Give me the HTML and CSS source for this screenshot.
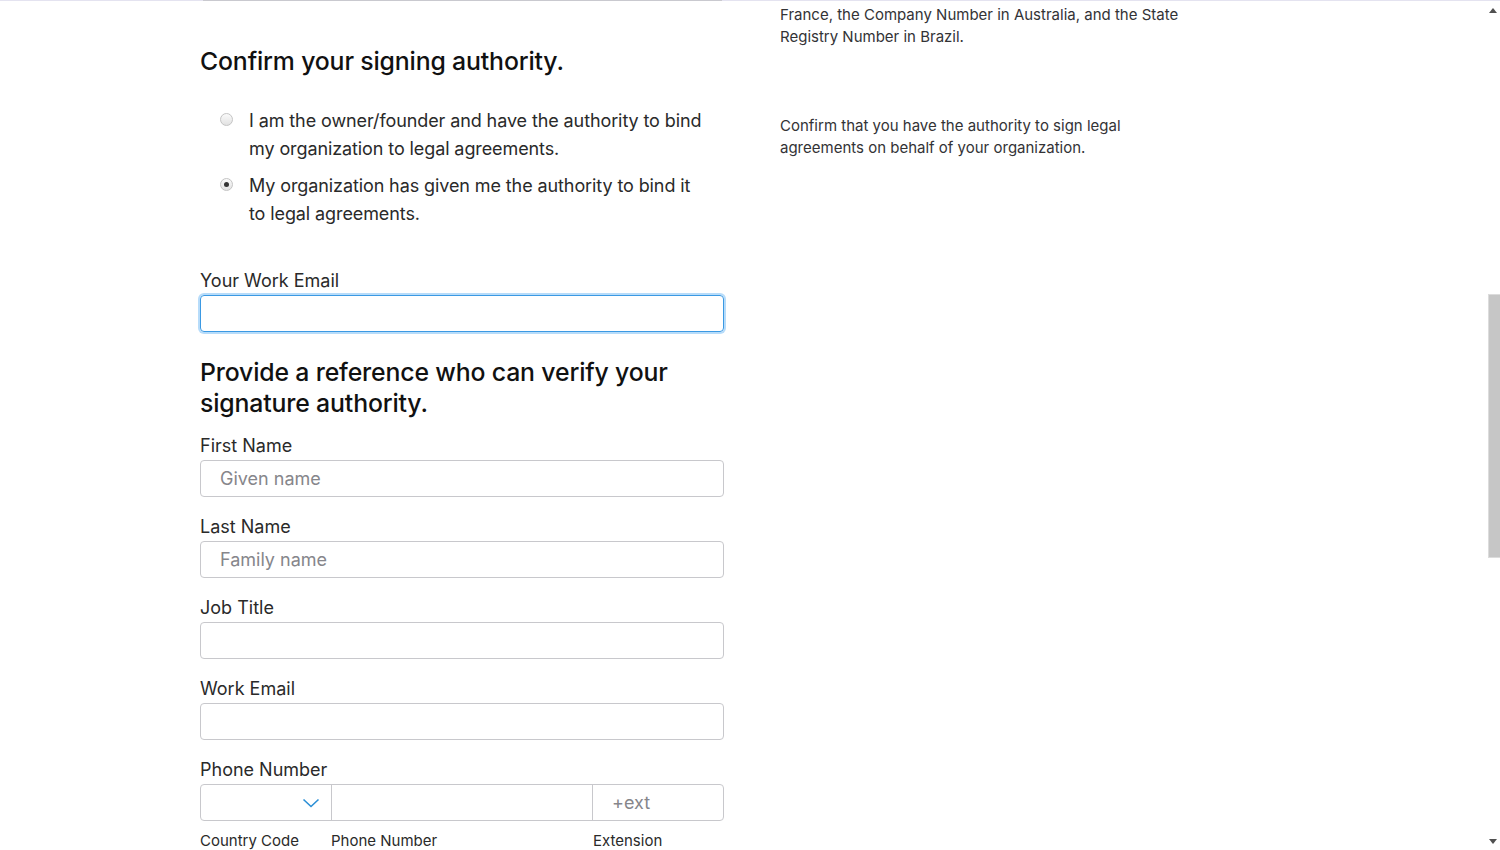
FILE: index.html
```html
<!DOCTYPE html>
<html lang="en">
<head>
<meta charset="utf-8">
<title>Signing authority</title>
<link rel="stylesheet" href="styles.css">
</head>
<body>
<div class="topline"></div>
<div class="page">
  <div class="main">
    <div class="prev-input"></div>
    <h2 class="heading h1">Confirm your signing authority.</h2>
    <div class="radios">
      <label class="radio-item">
        <span class="radio"></span>
        <span class="radio-text">I am the owner/founder and have the authority to bind my organization to legal agreements.</span>
      </label>
      <label class="radio-item">
        <span class="radio checked"></span>
        <span class="radio-text">My organization has given me the authority to bind it to legal agreements.</span>
      </label>
    </div>

    <div class="field first">
      <div class="label">Your Work Email</div>
      <div class="input focus"></div>
    </div>

    <h2 class="heading h2">Provide a reference who can verify your signature authority.</h2>

    <div class="field">
      <div class="label">First Name</div>
      <div class="input"><span class="ph">Given name</span></div>
    </div>
    <div class="field">
      <div class="label">Last Name</div>
      <div class="input"><span class="ph">Family name</span></div>
    </div>
    <div class="field">
      <div class="label">Job Title</div>
      <div class="input"></div>
    </div>
    <div class="field">
      <div class="label">Work Email</div>
      <div class="input"></div>
    </div>
    <div class="field">
      <div class="label">Phone Number</div>
      <div class="phone">
        <div class="seg cc">
          <svg class="chev" width="18" height="12" viewBox="0 0 18 12"><polyline points="1.5,2.5 9,9.5 16.5,2.5" fill="none" stroke="#2b8fd6" stroke-width="1.6"/></svg>
        </div>
        <div class="seg num"></div>
        <div class="seg ext"><span class="ph">+ext</span></div>
      </div>
      <div class="sublabels">
        <span class="sl cc">Country Code</span>
        <span class="sl num">Phone Number</span>
        <span class="sl ext">Extension</span>
      </div>
    </div>
  </div>
  <aside class="side">
    <p class="note n1">France, the Company Number in Australia, and the State Registry Number in Brazil.</p>
    <p class="note n2">Confirm that you have the authority to sign legal agreements on behalf of your organization.</p>
  </aside>
</div>
<div class="scrollbar">
  <span class="arrow up"></span>
  <span class="thumb"></span>
  <span class="arrow down"></span>
</div>
</body>
</html>
```

FILE: styles.css
```css
html, body {
  margin: 0;
  padding: 0;
  height: 850px;
  overflow: hidden;
  background: #fff;
}
body {
  font-family: Inter, "Noto Sans", "Liberation Sans", sans-serif;
  color: #1d1d1f;
  position: relative;
}
.topline {
  height: 1px;
  background: #e4e3f0;
}
.page {
  display: flex;
  padding-left: 200px;
  gap: 56px;
}
.main {
  width: 524px;
  display: flex;
  flex-direction: column;
}
.prev-input {
  height: 1px;
  margin: -1px 2px 0 3px;
  background: #c9c9cf;
}
.heading {
  margin: 0;
  font-size: 24.8px;
  font-weight: 500;
  color: #111;
  letter-spacing: -0.15px;
}
.h1 {
  line-height: 30px;
  margin-top: 45px;
}
.radios {
  margin-top: 31px;
  padding-left: 20px;
  display: flex;
  flex-direction: column;
  gap: 9px;
}
.radio-item {
  display: flex;
  align-items: flex-start;
  gap: 16px;
}
.radio {
  flex: none;
  width: 13px;
  height: 13px;
  margin-top: 6px;
  border-radius: 50%;
  box-sizing: border-box;
  border: 1px solid #c4c4c4;
  background: linear-gradient(#fafafa, #e2e2e2);
  position: relative;
}
.radio.checked::after {
  content: "";
  position: absolute;
  left: 3px;
  top: 3px;
  width: 5px;
  height: 5px;
  border-radius: 50%;
  background: #333;
}
.radio-text {
  width: 458px;
  font-size: 18px;
  line-height: 28px;
  letter-spacing: -0.1px;
  color: #2a2a2a;
}
.field {
  display: flex;
  flex-direction: column;
  margin-top: 19px;
}
.field.first {
  margin-top: 42px;
}
.label {
  font-size: 18px;
  line-height: 22px;
  color: #2a2a2a;
  margin-bottom: 3px;
}
.input {
  height: 37px;
  box-sizing: border-box;
  border: 1px solid #c8c8cc;
  border-radius: 4px;
  display: flex;
  align-items: center;
  padding-left: 19px;
}
.input.focus {
  border-color: #3b99e3;
  box-shadow: 0 0 0 2px #b7dcfa;
}
.ph {
  font-size: 18px;
  color: #86868b;
}
.h2 {
  line-height: 31px;
  margin-top: 25px;
  margin-bottom: -3px;
}
.phone {
  display: flex;
  height: 37px;
  box-sizing: border-box;
  border: 1px solid #c8c8cc;
  border-radius: 4px;
}
.seg {
  display: flex;
  align-items: center;
  box-sizing: border-box;
}
.seg.cc {
  width: 131px;
  border-right: 1px solid #c8c8cc;
  justify-content: flex-end;
  padding-right: 11px;
}
.seg.num {
  width: 261px;
  border-right: 1px solid #c8c8cc;
}
.seg.ext {
  flex: 1;
  padding-left: 19px;
}
.chev {
  display: block;
}
.sublabels {
  display: flex;
  margin-top: 9px;
  font-size: 15px;
  line-height: 22px;
  color: #2a2a2a;
}
.sl.cc { width: 131px; }
.sl.num { width: 262px; }
.side {
  width: 400px;
}
.note {
  margin: 0;
  font-size: 15px;
  line-height: 22px;
  color: #333336;
}
.n1 { margin-top: 3px; }
.n2 { margin-top: 67px; }
.scrollbar {
  position: absolute;
  top: 1px;
  right: 0;
  width: 15px;
  height: 849px;
  background: #fff;
}
.thumb {
  position: absolute;
  left: 3px;
  right: 0;
  top: 293px;
  height: 264px;
  background: #c6c6c6;
  border: 1px solid #dcdcdc;
  border-right: none;
  box-sizing: border-box;
}
.arrow {
  position: absolute;
  left: 4px;
  width: 0;
  height: 0;
  border-left: 4px solid transparent;
  border-right: 4px solid transparent;
}
.arrow.up {
  top: 7px;
  border-bottom: 5px solid #505050;
}
.arrow.down {
  bottom: 6px;
  border-top: 5px solid #505050;
}
```
